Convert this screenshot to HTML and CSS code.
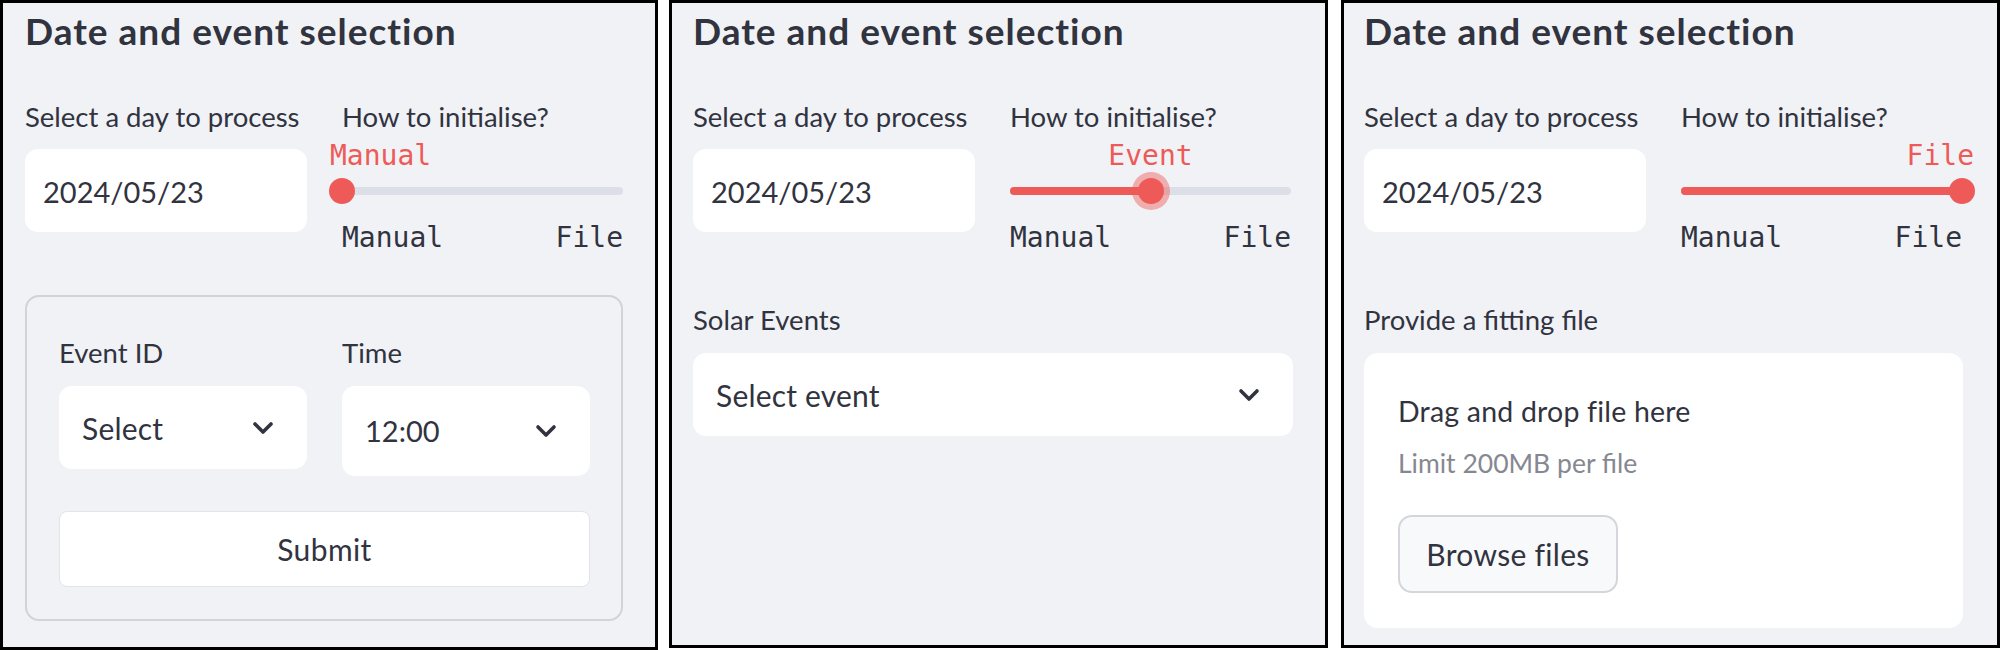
FILE: index.html
```html
<!DOCTYPE html>
<html lang="en">
<head>
<meta charset="utf-8">
<title>Date and event selection</title>
<link rel="stylesheet" href="styles.css">
</head>
<body>
<div class="strip">
  <section class="panel panel-a">
    <h2 class="title">Date and event selection</h2>
    <div class="cols">
      <div class="col">
        <div class="label">Select a day to process</div>
        <div class="field date-field"><span>2024/05/23</span></div>
      </div>
      <div class="col">
        <div class="label">How to initialise?</div>
        <div class="slider">
          <div class="slider-value-row"><span class="slider-value at-start">Manual</span></div>
          <div class="track">
            <div class="rail">
              <div class="fill" style="width:0%"></div>
              <div class="thumb" style="left:0%"></div>
            </div>
          </div>
          <div class="ticks"><span>Manual</span><span>File</span></div>
        </div>
      </div>
    </div>
    <div class="form">
      <div class="form-cols">
        <div class="col">
          <div class="label">Event ID</div>
          <div class="field select-field"><span>Select</span>
            <svg class="chev" width="22" height="14" viewBox="0 0 22 14"><polyline points="3,3 11,11 19,3" fill="none" stroke="#31333f" stroke-width="3.6" stroke-linecap="round" stroke-linejoin="round"/></svg>
          </div>
        </div>
        <div class="col">
          <div class="label">Time</div>
          <div class="field select-field tall"><span class="num">12:00</span>
            <svg class="chev" width="22" height="14" viewBox="0 0 22 14"><polyline points="3,3 11,11 19,3" fill="none" stroke="#31333f" stroke-width="3.6" stroke-linecap="round" stroke-linejoin="round"/></svg>
          </div>
        </div>
      </div>
      <div class="submit">Submit</div>
    </div>
  </section>

  <section class="panel panel-b">
    <h2 class="title">Date and event selection</h2>
    <div class="cols">
      <div class="col">
        <div class="label">Select a day to process</div>
        <div class="field date-field"><span>2024/05/23</span></div>
      </div>
      <div class="col">
        <div class="label">How to initialise?</div>
        <div class="slider">
          <div class="slider-value-row"><span class="slider-value at-mid" style="left:50%">Event</span></div>
          <div class="track">
            <div class="rail">
              <div class="fill" style="width:50%"></div>
              <div class="thumb focused" style="left:50%"></div>
            </div>
          </div>
          <div class="ticks"><span>Manual</span><span>File</span></div>
        </div>
      </div>
    </div>
    <div class="label section-label">Solar Events</div>
    <div class="field select-field wide"><span>Select event</span>
      <svg class="chev" width="22" height="14" viewBox="0 0 22 14"><polyline points="3,3 11,11 19,3" fill="none" stroke="#31333f" stroke-width="3.6" stroke-linecap="round" stroke-linejoin="round"/></svg>
    </div>
  </section>

  <section class="panel panel-c">
    <h2 class="title">Date and event selection</h2>
    <div class="cols">
      <div class="col">
        <div class="label">Select a day to process</div>
        <div class="field date-field"><span>2024/05/23</span></div>
      </div>
      <div class="col">
        <div class="label">How to initialise?</div>
        <div class="slider">
          <div class="slider-value-row"><span class="slider-value at-end">File</span></div>
          <div class="track">
            <div class="rail">
              <div class="fill" style="width:100%"></div>
              <div class="thumb" style="left:100%"></div>
            </div>
          </div>
          <div class="ticks"><span>Manual</span><span>File</span></div>
        </div>
      </div>
    </div>
    <div class="label section-label">Provide a fitting file</div>
    <div class="uploader">
      <div class="drop-title">Drag and drop file here</div>
      <div class="drop-hint">Limit 200MB per file</div>
      <div class="browse">Browse files</div>
    </div>
  </section>
</div>
</body>
</html>
```

FILE: styles.css
```css
* { box-sizing: border-box; }

html, body {
  margin: 0;
  padding: 0;
  background: #ffffff;
}

body {
  width: 2000px;
  height: 650px;
  overflow: hidden;
  font-family: "Source Sans Pro", Lato, "Noto Sans", sans-serif;
  color: #31333f;
}

.strip {
  display: flex;
  align-items: flex-start;
}

.panel {
  flex: none;
  background: #f0f2f6;
  border: 3px solid #000;
  padding: 6px 0 0 21px;
  height: 648px;
}

.panel-a { width: 658px; height: 650px; padding-left: 22px; }
.panel-b { width: 659px; margin-left: 11px; }
.panel-c { width: 659px; margin-left: 13px; padding-left: 20px; }

.title {
  margin: 0;
  font-size: 37px;
  line-height: 44px;
  font-weight: 700;
  letter-spacing: 1px;
  color: #31333f;
}

.cols {
  display: grid;
  grid-template-columns: 282px 281px;
  column-gap: 35px;
  width: 598px;
  margin-top: 46px;
  align-items: start;
}

.label {
  font-size: 27.5px;
  line-height: 36px;
  height: 36px;
  white-space: nowrap;
}

.field {
  background: #ffffff;
  border-radius: 13px;
  height: 83px;
  display: flex;
  align-items: center;
  font-size: 30px;
  letter-spacing: 0.2px;
  line-height: 36px;
}

.date-field {
  margin-top: 14px;
  padding: 3px 0 0 18px;
  font-size: 29px;
  letter-spacing: 0;
}

.num { font-size: 29px; letter-spacing: 0; }

.slider { margin-top: 7px; }

.slider-value-row {
  position: relative;
  height: 28px;
}

.slider-value {
  position: absolute;
  top: 0;
  font-family: "DejaVu Sans Mono", monospace;
  font-size: 28px;
  line-height: 28px;
  color: #ee5a57;
  white-space: nowrap;
}

.at-start { left: -12px; }
.at-mid { transform: translateX(-50%); }
.at-end { right: -12px; }

.track {
  margin-top: 8px;
  height: 26px;
  padding-top: 9px;
}

.rail {
  position: relative;
  height: 8px;
  border-radius: 4px;
  background: #dcdfe7;
}

.fill {
  position: absolute;
  left: 0;
  top: 0;
  height: 8px;
  border-radius: 4px;
  background: #ee5a57;
}

.thumb {
  position: absolute;
  top: 50%;
  width: 26px;
  height: 26px;
  border-radius: 50%;
  background: #ee5a57;
  transform: translate(-50%, -50%);
}

.thumb.focused {
  box-shadow: 0 0 0 6px rgba(238, 90, 87, 0.45);
}

.ticks {
  margin-top: 20px;
  display: flex;
  justify-content: space-between;
  font-family: "DejaVu Sans Mono", monospace;
  font-size: 28px;
  line-height: 28px;
  color: #31333f;
}

.form {
  margin-top: 43px;
  width: 598px;
  height: 326px;
  border: 2px solid #d2d3d8;
  border-radius: 14px;
  padding: 38px 31px 0 32px;
}

.form-cols {
  display: grid;
  grid-template-columns: 248px 248px;
  column-gap: 35px;
  align-items: start;
}

.select-field {
  margin-top: 15px;
  padding: 0 33px 0 23px;
  justify-content: space-between;
}

.select-field.tall { height: 90px; }

.chev { flex: none; display: block; }

.submit {
  margin-top: 35px;
  height: 76px;
  background: #ffffff;
  border: 1px solid #e3e4e8;
  border-radius: 8px;
  display: flex;
  align-items: center;
  justify-content: center;
  font-size: 30px;
  letter-spacing: 0.4px;
  line-height: 36px;
}

.section-label { margin-top: 50px; }

.select-field.wide { width: 600px; }

.uploader {
  margin-top: 15px;
  width: 599px;
  height: 275px;
  background: #ffffff;
  border-radius: 14px;
  padding: 40px 0 0 34px;
}

.drop-title {
  font-size: 28.5px;
  letter-spacing: 0.2px;
  line-height: 36px;
}

.drop-hint {
  margin-top: 16px;
  font-size: 26.5px;
  line-height: 36px;
  color: #868891;
}

.browse {
  margin-top: 34px;
  width: 220px;
  height: 78px;
  border: 2px solid #d5d6db;
  border-radius: 14px;
  background: #f8f9fb;
  display: flex;
  align-items: center;
  justify-content: center;
  font-size: 30px;
  letter-spacing: 0.3px;
  line-height: 36px;
}
```
